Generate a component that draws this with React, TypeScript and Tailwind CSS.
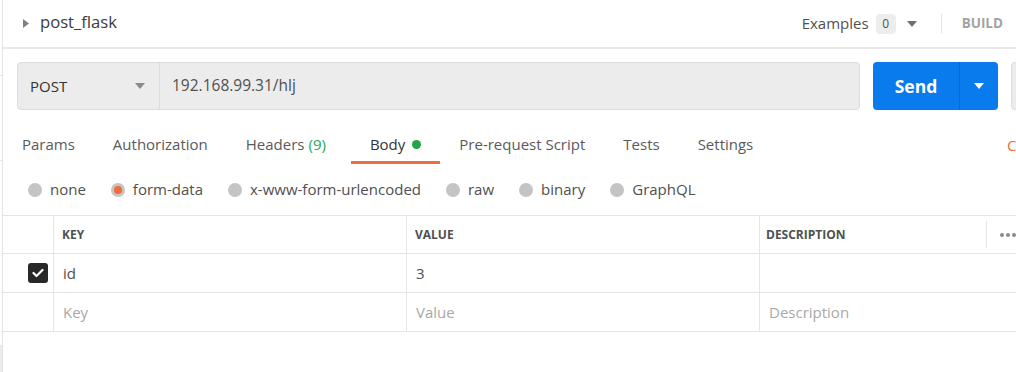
import React from "react";

const tabs = [
    { label: "Params" },
    { label: "Authorization" },
    { label: "Headers", count: "(9)" },
    { label: "Body", active: true },
    { label: "Pre-request Script" },
    { label: "Tests" },
    { label: "Settings" },
];

const bodyModes = [
    { label: "none" },
    { label: "form-data", checked: true },
    { label: "x-www-form-urlencoded" },
    { label: "raw" },
    { label: "binary" },
    { label: "GraphQL" },
];

function Caret({ className = "" }: { className?: string }) {
    return (
        <svg width="10" height="6" viewBox="0 0 10 6" className={`shrink-0 ${className}`}>
            <path d="M0 0 L10 0 L5 6 Z" fill="currentColor" />
        </svg>
    );
}

export default function App() {
    return (
        <div
            className="w-[1016px] h-[372px] overflow-hidden bg-white flex text-[#505050]"
            style={{ fontFamily: '"Open Sans", "Liberation Sans", sans-serif' }}
        >
            {/* sidebar edge */}
            <div className="w-[2px] shrink-0 flex flex-col">
                <div className="h-[75px]" />
                <div className="h-px bg-[#e6e6e6]" />
                <div className="h-[84px]" />
                <div className="h-px bg-[#e6e6e6]" />
                <div className="flex-1" />
                <div className="h-[27px] bg-[#ececec]" />
            </div>

            <div className="flex-1 min-w-0 border-l border-[#e3e3e3] flex flex-col">
                {/* Header */}
                <div className="h-[49px] shrink-0 border-b-2 border-[#e8e8e8] flex items-center pl-[20px] pr-[13px]">
                    <svg width="6" height="9" viewBox="0 0 6 9" className="text-[#808080] shrink-0">
                        <path d="M0 0 L6 4.5 L0 9 Z" fill="currentColor" />
                    </svg>
                    <span className="ml-[11px] text-[16.6px] text-[#3c3c3c] leading-none pb-[3px]">post_flask</span>
                    <div className="ml-auto flex items-center">
                        <span className="text-[15px] text-[#505050]">Examples</span>
                        <span className="ml-[7px] w-[20px] h-[20px] rounded-sm bg-[#ededed] text-[12px] flex items-center justify-center text-[#505050]">
                            0
                        </span>
                        <Caret className="ml-[11px] text-[#707070]" />
                        <div className="ml-[24px] w-px h-[19px] bg-[#e3e3e3]" />
                        <span className="ml-[20px] text-[13.5px] font-bold text-[#a3a3a3]">BUILD</span>
                    </div>
                </div>

                {/* URL row */}
                <div className="mt-[13px] h-[48px] shrink-0 flex pl-[14px]">
                    <div className="w-[843px] shrink-0 flex rounded-[4px] border border-[#dcdcdc] bg-[#ececec]">
                        <div className="w-[142px] shrink-0 flex items-center pl-[12px] pr-[14px] border-r border-[#dcdcdc]">
                            <span className="text-[15px] text-[#333]">POST</span>
                            <Caret className="ml-auto text-[#8a8a8a]" />
                        </div>
                        <div className="flex-1 flex items-center pl-[12px] text-[15.5px] text-[#505050]">
                            192.168.99.31/hlj
                        </div>
                    </div>
                    <div className="ml-[13px] w-[125px] shrink-0 flex rounded-[4px] bg-[#097bed] text-white">
                        <div className="w-[87px] flex items-center justify-center border-r border-[#0668d4]">
                            <span className="text-[17.5px] font-bold">Send</span>
                        </div>
                        <div className="flex-1 flex items-center justify-center">
                            <Caret />
                        </div>
                    </div>
                    <div className="ml-[13px] w-[80px] shrink-0 rounded-[4px] border border-[#dcdcdc] bg-[#ececec]" />
                </div>

                {/* Tabs */}
                <div className="mt-[13px] h-[41px] shrink-0 flex items-stretch">
                    {tabs.map((t) => (
                        <div
                            key={t.label}
                            className={`shrink-0 whitespace-nowrap px-[19px] pt-[4px] flex items-center border-b-[3px] text-[15px] ${
                                t.active ? "border-[#f26b3a] text-[#333]" : "border-transparent text-[#5a5a5a]"
                            } ${t.count ? "pr-[25px]" : ""}`}
                        >
                            {t.label}
                            {t.count && <span className="ml-[4px] text-[#26a85a]">{t.count}</span>}
                            {t.active && <span className="ml-[7px] w-[9px] h-[9px] rounded-full bg-[#26a346]" />}
                        </div>
                    ))}
                    <div className="flex-1" />
                    <div className="w-[9px] shrink-0 pt-[4px] flex items-center text-[15px] text-[#f26b3a] whitespace-nowrap">
                        Cookies
                    </div>
                </div>

                {/* Body modes */}
                <div className="h-[51px] shrink-0 flex items-center pl-[25px] gap-[25px]">
                    {bodyModes.map((m) => (
                        <label key={m.label} className="shrink-0 whitespace-nowrap flex items-center gap-[8px] text-[15px] text-[#505050]">
                            <span className="w-[14px] h-[14px] rounded-full bg-[#c4c4c4] flex items-center justify-center">
                                {m.checked && <span className="w-[8px] h-[8px] rounded-full bg-[#f26b3a]" />}
                            </span>
                            {m.label}
                        </label>
                    ))}
                </div>

                {/* Table */}
                <div className="border-t border-[#e5e5e5]">
                    <div className="h-[38px] flex border-b border-[#e5e5e5] text-[12px] font-bold text-[#505050]">
                        <div className="w-[51px] shrink-0 border-r border-[#e5e5e5]" />
                        <div className="w-[353px] shrink-0 border-r border-[#e5e5e5] flex items-center pl-[8px]">KEY</div>
                        <div className="w-[353px] shrink-0 border-r border-[#e5e5e5] flex items-center pl-[8px]">VALUE</div>
                        <div className="flex-1 flex items-center pl-[6px]">
                            <span className="flex-1">DESCRIPTION</span>
                            <div className="w-px h-[27px] bg-[#e5e5e5]" />
                            <span className="ml-[13px] flex gap-[2px]">
                                <span className="w-[4px] h-[4px] rounded-full bg-[#8a8a8a]" />
                                <span className="w-[4px] h-[4px] rounded-full bg-[#8a8a8a]" />
                                <span className="w-[4px] h-[4px] rounded-full bg-[#8a8a8a]" />
                            </span>
                        </div>
                    </div>
                    <div className="h-[39px] flex border-b border-[#e5e5e5] text-[15px] text-[#505050]">
                        <div className="w-[51px] shrink-0 border-r border-[#e5e5e5] flex items-center justify-end pr-[5px]">
                            <span className="w-[20px] h-[20px] rounded-[3px] bg-[#282828] flex items-center justify-center">
                                <svg width="12" height="10" viewBox="0 0 12 10">
                                    <path d="M1.5 5 L4.5 8 L10.5 2" stroke="white" strokeWidth="2.2" fill="none" strokeLinecap="round" strokeLinejoin="round" />
                                </svg>
                            </span>
                        </div>
                        <div className="w-[353px] shrink-0 border-r border-[#e5e5e5] flex items-center pl-[9px]">id</div>
                        <div className="w-[353px] shrink-0 border-r border-[#e5e5e5] flex items-center pl-[9px]">3</div>
                        <div className="flex-1" />
                    </div>
                    <div className="h-[39px] flex border-b border-[#e5e5e5] text-[15px] text-[#a8a8a8]">
                        <div className="w-[51px] shrink-0 border-r border-[#e5e5e5]" />
                        <div className="w-[353px] shrink-0 border-r border-[#e5e5e5] flex items-center pl-[9px]">Key</div>
                        <div className="w-[353px] shrink-0 border-r border-[#e5e5e5] flex items-center pl-[9px]">Value</div>
                        <div className="flex-1 flex items-center pl-[9px]">Description</div>
                    </div>
                </div>
            </div>
        </div>
    );
}
